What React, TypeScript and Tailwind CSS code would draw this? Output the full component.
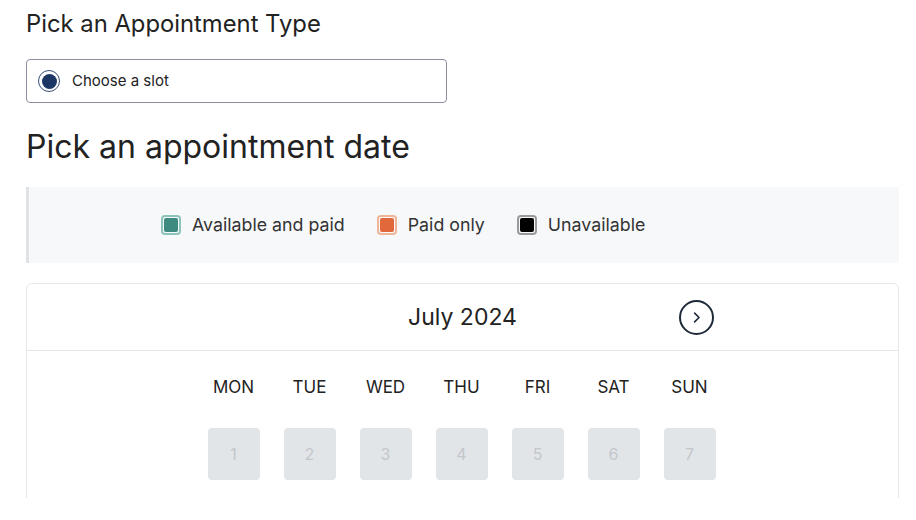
import React from 'react';

const legend = [
  { label: 'Available and paid', fill: 'bg-[#3f8a80]', ring: 'border-[#8cc3bb]' },
  { label: 'Paid only', fill: 'bg-[#e0683a]', ring: 'border-[#f0b496]' },
  { label: 'Unavailable', fill: 'bg-black', ring: 'border-[#9a9a9a]' },
];

const weekdays = ['MON', 'TUE', 'WED', 'THU', 'FRI', 'SAT', 'SUN'];

const App: React.FC = () => {
  return (
    <div className="w-[916px] h-[520px] bg-white text-[#1f1f1f]" style={{ fontFamily: 'Inter, "Noto Sans", sans-serif' }}>
      <div className="h-[498px] overflow-hidden pl-[26px] pr-[17px]">
        <h2 className="pt-[9px] text-[23.8px] leading-[29px] font-normal text-[#222]">Pick an Appointment Type</h2>

        <div className="mt-[21px] w-[421px] h-[44px] flex items-center gap-[12px] px-[11px] border border-[#8e8ea3] rounded-[4px]">
          <span className="w-[22px] h-[22px] rounded-full border-[1.5px] border-[#3a4f78] flex items-center justify-center">
            <span className="w-[15px] h-[15px] rounded-full bg-[#1c3763]" />
          </span>
          <span className="text-[15px] text-[#222]">Choose a slot</span>
        </div>

        <h1 className="mt-[24px] text-[32px] leading-[39px] font-normal text-[#222]">Pick an appointment date</h1>

        <div className="mt-[21px] h-[76px] bg-[#f7f8fa] border-l-[3px] border-[#dfe3e6] flex items-center gap-[32px] pl-[132px]">
          {legend.map((item) => (
            <div key={item.label} className="flex items-center gap-[11px]">
              <span className={`w-[20px] h-[20px] rounded-[4px] border-2 ${item.ring} flex items-center justify-center`}>
                <span className={`w-[14px] h-[14px] rounded-[2px] ${item.fill}`} />
              </span>
              <span className="text-[17.8px] text-[#333]">{item.label}</span>
            </div>
          ))}
        </div>

        <div className="mt-[20px] border border-[#e6e8ea] rounded-[6px] bg-white">
          <div className="h-[67px] border-b border-[#e6e8ea] relative flex items-center justify-center">
            <span className="text-[23px] text-[#222] mt-[1px]">July 2024</span>
            <button className="absolute left-[652px] top-[16px] w-[35px] h-[35px] rounded-full border-2 border-[#1e2a3a] flex items-center justify-center">
              <svg width="15" height="15" viewBox="0 0 24 24" fill="none" stroke="#1e2a3a" strokeWidth="2.6" strokeLinecap="round" strokeLinejoin="round">
                <path d="M9 5l7 7-7 7" />
              </svg>
            </button>
          </div>
          <div className="pt-[26px] pb-[40px] flex justify-center">
            <div className="grid grid-cols-7 w-[532px] -ml-[2px]">
              {weekdays.map((d) => (
                <div key={d} className="h-[22px] flex items-center justify-center text-[17px] text-[#222]">{d}</div>
              ))}
              {[1, 2, 3, 4, 5, 6, 7].map((n) => (
                <div key={n} className="mt-[29px] flex justify-center">
                  <div className="w-[52px] h-[52px] rounded-[4px] bg-[#e2e5e8] flex items-center justify-center text-[16px] text-[#c3c7cb]">{n}</div>
                </div>
              ))}
            </div>
          </div>
        </div>
      </div>
    </div>
  );
};

export default App;
